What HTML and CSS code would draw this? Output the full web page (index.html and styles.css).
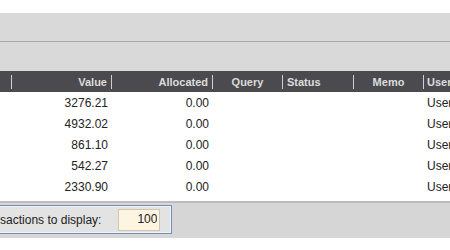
FILE: index.html
```html
<!DOCTYPE html>
<html lang="en">
<head>
  <meta charset="UTF-8" />
  <meta name="viewport" content="width=device-width, initial-scale=1.0"/>
  <title>Transactions</title>
  <link rel="stylesheet" href="styles.css">
</head>
<body>

  <div class="app">
    <div class="toolbar"></div>
    <div class="toolbar toolbar-lower"></div>

    <div class="grid">
      <div class="grid-row grid-head">
        <div class="cell"></div>
        <div class="cell num">Value</div>
        <div class="cell num">Allocated</div>
        <div class="cell mid">Query</div>
        <div class="cell">Status</div>
        <div class="cell mid">Memo</div>
        <div class="cell last">User</div>
      </div>

      <div class="grid-row">
        <div class="cell"></div>
        <div class="cell num">3276.21</div>
        <div class="cell num">0.00</div>
        <div class="cell"></div>
        <div class="cell"></div>
        <div class="cell"></div>
        <div class="cell last">User</div>
      </div>
      <div class="grid-row">
        <div class="cell"></div>
        <div class="cell num">4932.02</div>
        <div class="cell num">0.00</div>
        <div class="cell"></div>
        <div class="cell"></div>
        <div class="cell"></div>
        <div class="cell last">User</div>
      </div>
      <div class="grid-row">
        <div class="cell"></div>
        <div class="cell num">861.10</div>
        <div class="cell num">0.00</div>
        <div class="cell"></div>
        <div class="cell"></div>
        <div class="cell"></div>
        <div class="cell last">User</div>
      </div>
      <div class="grid-row">
        <div class="cell"></div>
        <div class="cell num">542.27</div>
        <div class="cell num">0.00</div>
        <div class="cell"></div>
        <div class="cell"></div>
        <div class="cell"></div>
        <div class="cell last">User</div>
      </div>
      <div class="grid-row">
        <div class="cell"></div>
        <div class="cell num">2330.90</div>
        <div class="cell num">0.00</div>
        <div class="cell"></div>
        <div class="cell"></div>
        <div class="cell"></div>
        <div class="cell last">User</div>
      </div>
    </div>

    <div class="footer">
      <div class="display-box">
        <label for="count">Number of transactions to display:</label>
        <input id="count" class="count" type="text" value="100">
      </div>
    </div>
  </div>

</body>
</html>
```

FILE: styles.css
```css
body {
  font-family: 'Liberation Sans', Arial, sans-serif;
  background: #fff;
  margin: 0;
  padding: 0;
  overflow: hidden;
}

.app {
  width: 450px;
  padding-top: 13px;
  overflow: hidden;
}

.toolbar {
  height: 28px;
  background: #d9d9d9;
  border-bottom: 1px solid #a9a9a9;
}

.toolbar-lower {
  height: 29px;
  border-bottom: none;
}

.grid-row {
  display: grid;
  grid-template-columns: 12px 100px 101px 70px 71px 70px 1fr;
  height: 21px;
  align-items: center;
  font-size: 12px;
  color: #222;
  white-space: nowrap;
}

.grid-row .cell {
  overflow: hidden;
}

.grid-row .num {
  text-align: right;
  padding-right: 4px;
}

.grid-row .last {
  padding-left: 3px;
}

.grid-head {
  background: #4b4b4f;
  color: #dcdcdc;
  font-size: 11px;
  font-weight: bold;
}

.grid-head .cell {
  height: 14px;
  line-height: 14px;
  border-right: 1px solid #cfcfcf;
  padding-left: 4px;
}

.grid-head .num {
  padding-left: 0;
}

.grid-head .mid {
  text-align: center;
  padding-left: 0;
}

.grid-head .last {
  border-right: none;
  padding-left: 3px;
}

.footer {
  margin-top: 4px;
  height: 35px;
  background: #d6d6d6;
  border-top: 2px solid #bcbcbc;
  padding-top: 2px;
  box-sizing: border-box;
  height: 37px;
}

.display-box {
  display: flex;
  align-items: center;
  gap: 17px;
  width: 258px;
  height: 29px;
  box-sizing: border-box;
  margin-left: -86px;
  padding: 0 11px 0 5px;
  background: #e3e3e3;
  border: 1px solid #6f8fbd;
  box-shadow: inset 0 0 0 1px #f2f2f2;
  font-size: 12px;
  color: #222;
  white-space: nowrap;
}

.count {
  width: 42px;
  height: 22px;
  box-sizing: border-box;
  border: 1px solid #cfc6ac;
  background: #fdf5e2;
  font-family: 'Liberation Sans', Arial, sans-serif;
  font-size: 12px;
  color: #222;
  text-align: right;
  padding: 0 2px 2px 0;
  margin: 0;
  outline: none;
}
```
